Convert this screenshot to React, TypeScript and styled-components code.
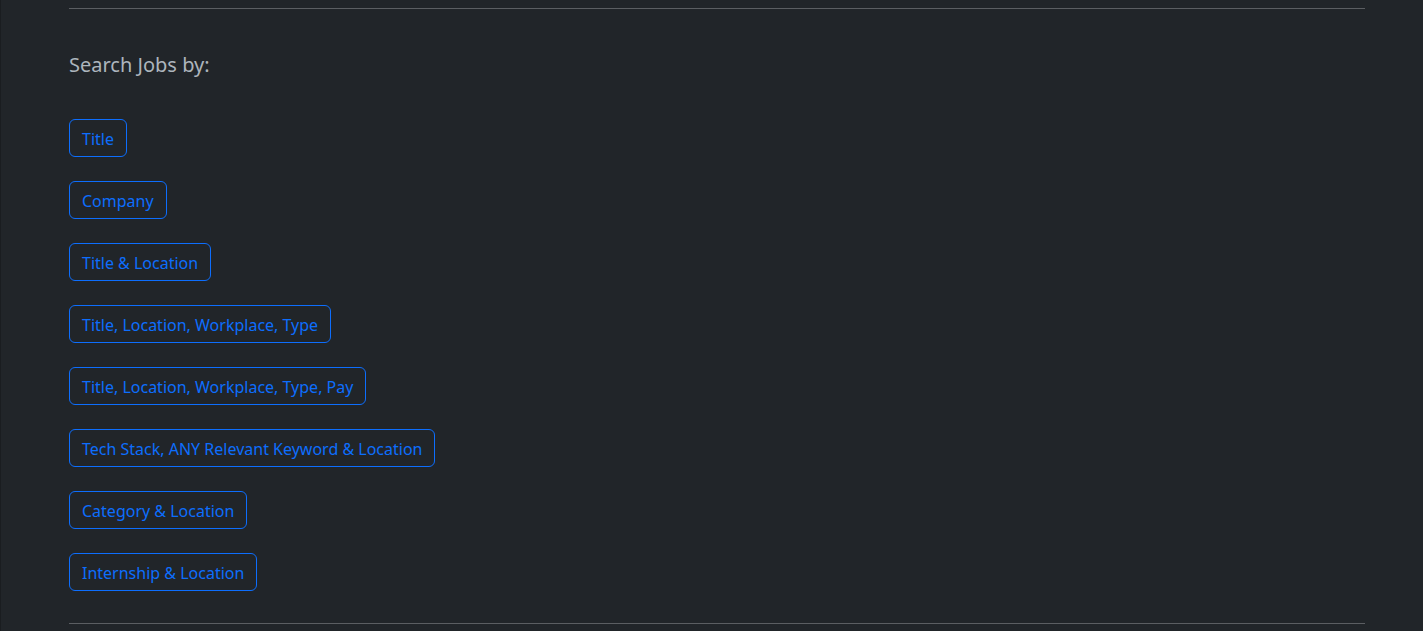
import styled, { createGlobalStyle } from "styled-components";

const GlobalStyle = createGlobalStyle`
  html, body {
    margin: 0;
    background-color: #212529;
    color: #dee2e6;
    font-family: "Noto Sans", "Open Sans", sans-serif;
    -webkit-font-smoothing: antialiased;
  }
`;

const Page = styled.div`
  min-height: 631px;
  box-sizing: border-box;
  border-left: 1px solid #1a1d20;
  padding: 8px 58px 0 68px;
`;

const Rule = styled.hr`
  margin: 0;
  border: 0;
  border-top: 1px solid #5b5e62;
`;

const Heading = styled.h2`
  margin: 44px 0 42px;
  font-size: 20px;
  font-weight: 400;
  line-height: 24px;
  color: #adb5bd;
`;

const Options = styled.div`
  display: flex;
  flex-direction: column;
  align-items: flex-start;
  gap: 24px;
  margin-bottom: 32px;
`;

const OutlineButton = styled.button`
  box-sizing: border-box;
  height: 38px;
  padding: 7px 12px 5px;
  font-family: inherit;
  font-size: 16px;
  line-height: 24px;
  color: #0d6efd;
  background: transparent;
  border: 1px solid #0d6efd;
  border-radius: 6px;
  cursor: pointer;

  &:hover {
    color: #fff;
    background: #0d6efd;
  }
`;

const options = [
  "Title",
  "Company",
  "Title & Location",
  "Title, Location, Workplace, Type",
  "Title, Location, Workplace, Type, Pay",
  "Tech Stack, ANY Relevant Keyword & Location",
  "Category & Location",
  "Internship & Location",
];

const App = () => {
  return (
    <>
      <GlobalStyle />
      <Page>
        <Rule />
        <Heading>Search Jobs by:</Heading>
        <Options>
          {options.map((label) => (
            <OutlineButton key={label}>{label}</OutlineButton>
          ))}
        </Options>
        <Rule />
      </Page>
    </>
  );
};

export default App;
